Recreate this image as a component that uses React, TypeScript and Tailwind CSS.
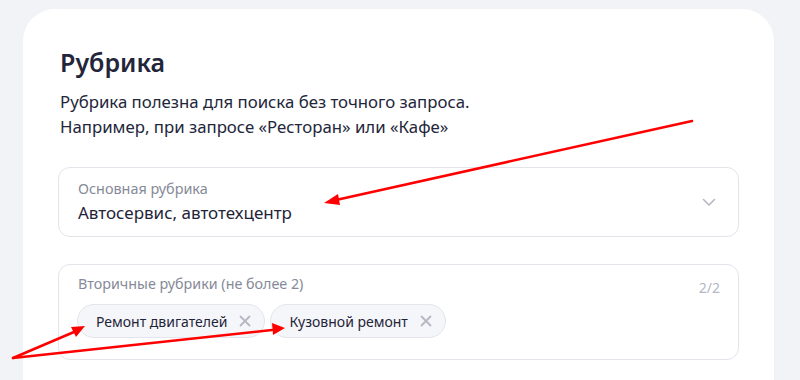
import React from 'react';

const font = { fontFamily: '"Noto Sans", "Open Sans", sans-serif' };

function Chip({ label }: { label: string }) {
  return (
    <div className="flex h-[34px] items-center gap-[12px] rounded-full border border-[#e4e5ec] bg-[#f5f6fa] pl-[18px] pr-[13px]">
      <span className="text-[14px] text-[#1f2438]">{label}</span>
      <svg width="12" height="12" viewBox="0 0 12 12" className="shrink-0">
        <path d="M1.5 1.5L10.5 10.5M10.5 1.5L1.5 10.5" stroke="#b5b8c3" strokeWidth="1.8" strokeLinecap="round" />
      </svg>
    </div>
  );
}

export default function App() {
  return (
    <div className="relative h-[380px] w-[800px] overflow-hidden bg-[#f2f3f7]" style={font}>
      <div className="ml-[23px] mt-[9px] h-[420px] w-[751px] rounded-[32px] bg-white px-[35px] pt-[36px]">
        <h1 className="px-[2px] text-[25px] font-semibold leading-[34px] text-[#23263a]">Рубрика</h1>
        <p className="mt-[10px] px-[2px] text-[16.8px] leading-[25px] text-[#23263a]">
          Рубрика полезна для поиска без точного запроса.
          <br />
          Например, при запросе «Ресторан» или «Кафе»
        </p>

        <div className="mt-[28px] flex h-[70px] items-center justify-between rounded-[12px] border border-[#e3e4ea] pl-[19px] pr-[22px]">
          <div className="flex flex-col">
            <span className="text-[14.4px] leading-[20px] text-[#868a98]">Основная рубрика</span>
            <span className="mt-[2px] text-[17px] leading-[24px] text-[#1f2438]">Автосервис, автотехцентр</span>
          </div>
          <svg width="14" height="9" viewBox="0 0 14 9">
            <path d="M1.5 1.5L7 7L12.5 1.5" fill="none" stroke="#b5b8c3" strokeWidth="1.6" strokeLinecap="round" strokeLinejoin="round" />
          </svg>
        </div>

        <div className="mt-[27px] h-[96px] rounded-[12px] border border-[#e3e4ea] pl-[19px] pr-[18px] pt-[8px]">
          <div className="flex items-start justify-between">
            <span className="text-[14.3px] leading-[22px] text-[#868a98]">Вторичные рубрики (не более 2)</span>
            <span className="mt-[4px] text-[14px] leading-[22px] text-[#b5b8c3]">2/2</span>
          </div>
          <div className="mt-[5px] flex gap-[5px] -ml-[1px]">
            <Chip label="Ремонт двигателей" />
            <Chip label="Кузовной ремонт" />
          </div>
        </div>
      </div>

      <svg className="pointer-events-none absolute left-0 top-0" width="800" height="380" viewBox="0 0 800 380">
        <g stroke="#ff0000" strokeWidth="2.5" strokeLinecap="round" fill="none">
          <line x1="692" y1="121" x2="336" y2="200" />
          <line x1="13" y1="358" x2="74" y2="332" />
          <line x1="13" y1="358" x2="272" y2="330" />
        </g>
        <g fill="#ff0000">
          <polygon points="324,203 338,194 340,205" />
          <polygon points="85,326 71,327 76,337" />
          <polygon points="285,328 272,323 273,335" />
        </g>
      </svg>
    </div>
  );
}
